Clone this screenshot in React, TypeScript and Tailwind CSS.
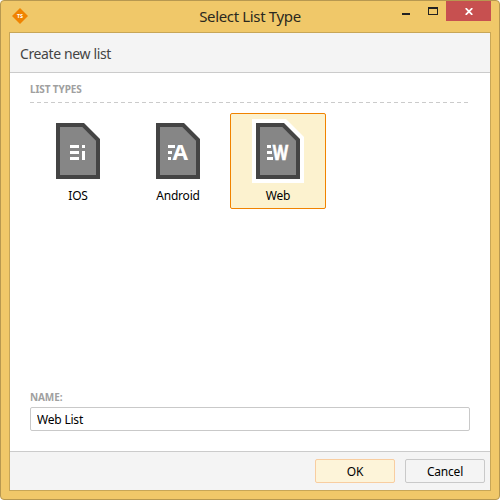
import type { ReactNode } from "react";

function AppLogo() {
  return (
    <svg width="16" height="16" viewBox="0 0 16 16">
      <path d="M8 0 L16 8 L8 16 L0 8 Z" fill="#f08300" />
      <text x="8" y="10" textAnchor="middle" fontSize="5.5" fontWeight="700" fill="#fff" textLength="6" lengthAdjust="spacingAndGlyphs">
        TS
      </text>
    </svg>
  );
}

function DocIcon({ selected, children }: { selected?: boolean; children: ReactNode }) {
  return (
    <svg width="52" height="64" viewBox="0 0 52 64" className="shrink-0">
      {selected && <path d="M0 0 H34 L52 18 V64 H0 Z" fill="#fff" />}
      <path d="M4 4 H32 L48 20 V60 H4 Z" fill="#444" />
      <path d="M8 8 H30.3 L44 21.7 V56 H8 Z" fill="#868686" />
      <g fill="#fff">{children}</g>
    </svg>
  );
}

function Tile({ label, selected, children }: { label: string; selected?: boolean; children: ReactNode }) {
  return (
    <div
      className={
        "flex h-24 w-24 flex-col items-center rounded-[2px] border pt-[5px] " +
        (selected ? "border-[#f08300] bg-[#fcf2cf]" : "border-transparent")
      }
    >
      <DocIcon selected={selected}>{children}</DocIcon>
      <span className="mt-[5px] text-[12px] leading-4 tracking-[-0.2px] text-black">{label}</span>
    </div>
  );
}

export default function App() {
  return (
    <div className="h-[500px] w-[500px] bg-white font-['Noto_Sans',sans-serif]">
      <div className="flex h-full flex-col rounded-[4px] border border-[#b79850] bg-[#f0c869] px-2 pb-2">
        <header className="flex h-[31px] shrink-0 items-start">
          <div className="w-[110px] pt-[7px] pl-[3px]">
            <AppLogo />
          </div>
          <h1 className="flex-1 pt-[5px] pl-[24px] text-center text-[15px] leading-5 tracking-[-0.35px] whitespace-nowrap text-[#2b2820]">
            Select List Type
          </h1>
          <div className="flex h-5 w-[134px] items-start justify-end">
            <svg width="45" height="20" viewBox="0 0 45 20">
              <rect x="9" y="12" width="8" height="2" fill="#222" />
              <path d="M35 6 H45 V14 H35 Z M36 8 V13 H44 V8 Z" fill="#222" fillRule="evenodd" />
            </svg>
            <div className="ml-2 flex h-5 w-[45px] items-center justify-center bg-[#c75050]">
              <svg width="8" height="7" viewBox="0 0 8 7" className="mt-[1px]">
                <path d="M0.7 0.2 L7.3 6.8 M7.3 0.2 L0.7 6.8" stroke="#fff" strokeWidth="1.8" />
              </svg>
            </div>
          </div>
        </header>
        <main className="flex min-h-0 flex-1 flex-col border border-[#c7a657] bg-white">
          <div className="h-10 shrink-0 border-b border-[#cbcbcb] bg-[#f4f4f4] pt-[11px] pl-[10px] text-[14px] leading-5 tracking-[-0.38px] text-[#444]">
            Create new list
          </div>
          <section className="flex flex-1 flex-col px-5">
            <h2 className="mt-[9px] text-[10px] leading-[14px] font-bold tracking-[-0.1px] text-[#a0a0a0]">LIST TYPES</h2>
            <div className="mt-[6px] h-px w-[438px] bg-[repeating-linear-gradient(90deg,#cbcbcb_0px,#cbcbcb_4px,transparent_4px,transparent_7px)]" />
            <div className="mt-[10px] flex gap-1">
              <Tile label="IOS">
                <path d="M18 26h9v3h-9z M18 32h9v3h-9z M18 38h9v3h-9z M30 26h3v3h-3z M30 32h3v9h-3z" />
              </Tile>
              <Tile label="Android">
                <path d="M16 26h7v3h-7z M16 32h4v3h-4z M16 38h3v3h-3z" />
                <text x="20.5" y="41" fontSize="20.5" fontWeight="700" textLength="15.5" lengthAdjust="spacingAndGlyphs">A</text>
              </Tile>
              <Tile label="Web" selected>
                <path d="M15 26h4v3h-4z M15 32h5v3h-5z M15 38h6v3h-6z" />
                <text x="20.8" y="41" fontSize="20.5" fontWeight="700" textLength="15.4" lengthAdjust="spacingAndGlyphs" stroke="#fff" strokeWidth="0.6">W</text>
              </Tile>
            </div>
            <label className="mt-auto flex flex-col pb-5 text-[10px] leading-[14px] font-bold tracking-[-0.1px] text-[#a0a0a0]">
              <span className="relative -top-px">NAME:</span>
              <input
                className="mt-[2px] h-6 w-[440px] rounded-[2px] border border-[#c9c9c9] bg-white px-[6px] pt-px text-[12px] font-normal tracking-[-0.2px] text-black outline-none"
                defaultValue="Web List"
              />
            </label>
          </section>
          <footer className="flex h-[39px] shrink-0 justify-end gap-[10px] border-t border-[#cbcbcb] bg-[#f4f4f4] pt-[7px] pr-[5px] text-[12px] tracking-[-0.2px] text-black">
            <button className="h-6 w-20 rounded-[2px] border border-[#f8cda0] bg-[#fdf4d9] pt-px">OK</button>
            <button className="h-6 w-20 rounded-[2px] border border-[#c9c9c9] bg-[#f4f4f4] pt-px">Cancel</button>
          </footer>
        </main>
      </div>
    </div>
  );
}
